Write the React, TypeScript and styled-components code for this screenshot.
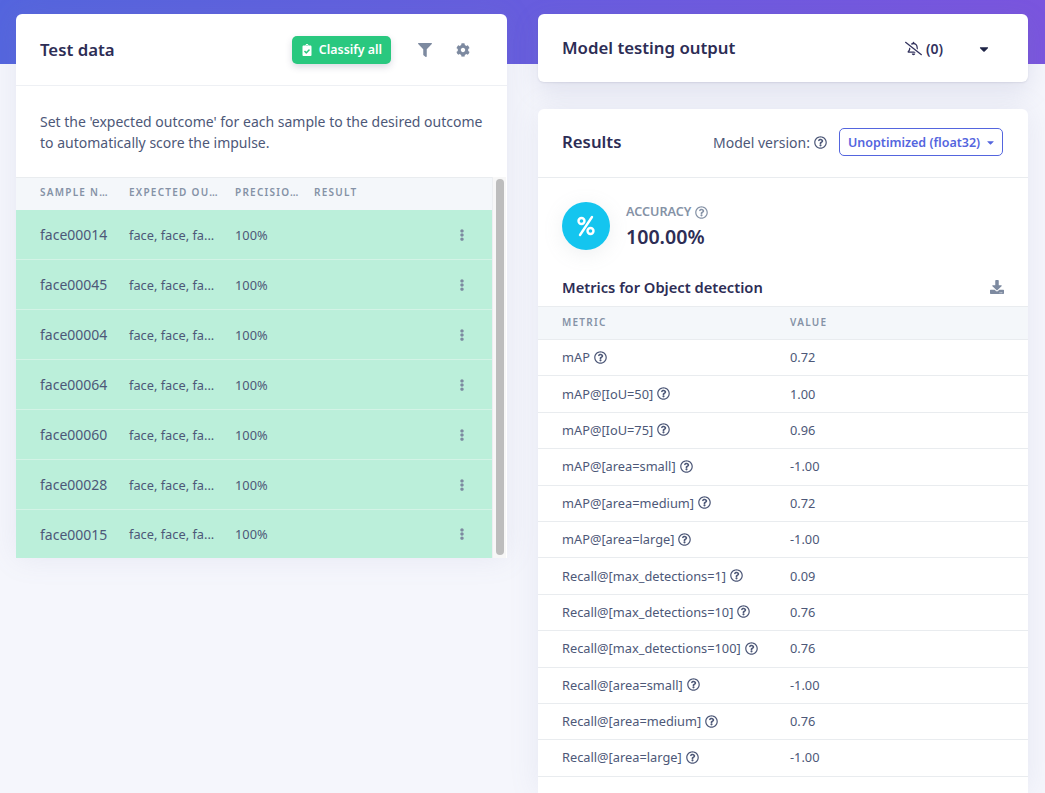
import React from "react";
import styled, { createGlobalStyle } from "styled-components";
import { FaClipboardCheck, FaFilter, FaCog, FaRegBellSlash, FaCaretDown, FaEllipsisV, FaDownload, FaRegQuestionCircle } from "react-icons/fa";

const Global = createGlobalStyle`
  html, body { margin: 0; height: 793px; overflow: hidden; }
  body { font-family: "Noto Sans", "Open Sans", sans-serif; color: #32325d; }
  * { box-sizing: border-box; }
`;
const Page = styled.div`
  width: 1045px; height: 793px; overflow: hidden;
  display: grid; grid-template-columns: 491px 490.5px; grid-template-rows: 1fr; column-gap: 31px;
  padding: 14px 17px 0 15.5px;
  background: linear-gradient(90deg, #5465de 0%, #7a55de 100%) top / 100% 64px no-repeat, #f5f6fc;
`;
const Column = styled.div`display: flex; flex-direction: column; gap: 27px; min-height: 0;`;
const Card = styled.section`
  background: #fff; border-radius: 6px 6px 0 0; box-shadow: 0 0 30px rgba(120,130,170,.12);
`;
const FillCard = styled(Card)`flex: 1;`;
const HeadCard = styled(Card)`
  height: 68px; border-radius: 6px; display: flex; align-items: center; padding: 0 37px 0 24.5px; flex: none;
  box-shadow: 0 1px 2px rgba(50,50,93,.10), 0 8px 26px rgba(120,130,170,.18);
`;
const Title = styled.h3`margin: 0; font-size: 16.8px; line-height: 24px; font-weight: 600; color: #2d2d55;`;
const LeftHead = styled.div`
  height: 72px; display: flex; align-items: center; padding: 0 36.5px 0 24.5px; border-bottom: 1px solid #eef0f4;
`;
const ClassifyBtn = styled.button`
  margin-left: auto; height: 28px; width: 99px; border: 0; border-radius: 5px; background: #29c87f; color: #fff;
  font: 600 12.4px "Noto Sans", sans-serif; display: flex; align-items: center; justify-content: center; gap: 6px;
  box-shadow: 0 3px 7px rgba(50,50,93,.18); padding: 0;
`;
const ToolIcon = styled.span<{ $ml: number }>`
  color: #7d8aa0; font-size: 14px; display: flex; margin-left: ${p => p.$ml}px;
`;
const Intro = styled.p`
  margin: 0; height: 91px; padding: 25px 18px 0 24.5px; font-size: 14px; line-height: 21px; color: #4d5878;
`;
const TableWrap = styled.div`display: grid; grid-template-columns: 476px 14px; background: #f7f7f7; width: 490px;`;
const Scrollbar = styled.div`
  padding: 2px 3px 3px 3px; border-left: 1px solid #eceef1;
  &::after { content: ""; display: block; height: 100%; width: 8px; background: #bdbdbd; border-radius: 4px; }
`;
const LeftHeader = styled.div`
  height: 33px; display: grid; grid-template-columns: 89px 106px 79px 1fr; padding: 0 0 5px 24.5px; align-items: center;
  background: #f4f7fa; border-top: 1px solid #e9ecef;
`;
const HeadCell = styled.span`
  font-size: 10px; font-weight: 600; letter-spacing: 1.25px; color: #8592a6; white-space: nowrap;
`;
const SampleRow = styled.div`
  height: 50px; display: grid; grid-template-columns: 89px 106px 79px 1fr; padding: 0 24px 0 24.5px; align-items: center;
  background: #bbefda; border-bottom: 1px solid #d3f3e6; color: #4d5878;
  &:last-child { height: 48px; border-bottom: 0; }
`;
const SampleName = styled.span`font-size: 14px;`;
const SampleCell = styled.span`font-size: 12.8px;`;
const Dots = styled.span`justify-self: end; color: #7d8aa0; font-size: 12px; display: flex;`;
const Bell = styled.div`
  margin-left: auto; display: flex; align-items: center; gap: 4px; font-size: 14px; font-weight: 600; color: #32325d;
`;
const DarkCaret = styled.span`margin-left: 34px; display: flex; font-size: 14px; color: #1f2547; padding-top: 2px;`;
const ResultsHead = styled.div`
  height: 69px; display: flex; align-items: center; padding: 0 25px 2px 24.5px; border-bottom: 1px solid #e9ecef;
`;
const VersionLabel = styled.span`
  margin-left: auto; font-size: 14px; color: #4d5878; display: flex; align-items: center; gap: 4px;
`;
const Help = styled(FaRegQuestionCircle)<{ $size?: number; $color?: string }>`
  font-size: ${p => p.$size || 13}px; color: ${p => p.$color || "#4d5878"}; flex: none;
`;
const VersionSelect = styled.div`
  margin-left: 12px; width: 164px; height: 28px; border: 1px solid #5465de; border-radius: 5px;
  display: flex; align-items: center; justify-content: space-between; padding: 0 6px 0 8px;
  color: #5465de; font-size: 12.5px; font-weight: 600;
`;
const Accuracy = styled.div`display: flex; gap: 16px; padding: 24px 24.5px 0; height: 95px;`;
const Badge = styled.div`
  width: 48px; height: 48px; border-radius: 50%; background: #14c5ef; color: #fff; display: flex; align-items: center; justify-content: center;
  box-shadow: 0 4px 20px rgba(140,152,164,.15);
`;
const AccLabel = styled.div`
  font-size: 12.6px; line-height: 16px; font-weight: 600; color: #8592a6; display: flex; align-items: center; gap: 4px; margin-top: 2px;
`;
const AccValue = styled.div`font-size: 19.6px; line-height: 28px; font-weight: 600; color: #2d2d55; margin-top: 3px;`;
const MetricsHead = styled.div`
  height: 33px; display: flex; align-items: center; justify-content: space-between; padding: 0 24.5px 5px;
`;
const MetricsTitle = styled.h4`margin: 0; font-size: 14.7px; font-weight: 600; color: #2d2d55;`;
const DownloadIcon = styled(FaDownload)`font-size: 14px; color: #7d8aa0;`;
const MetricHeader = styled.div`
  height: 34px; display: grid; grid-template-columns: 228px 1fr; padding: 0 0 2px 24.5px; align-items: center;
  background: #f4f7fa; border-top: 1px solid #e9ecef; border-bottom: 1px solid #e9ecef;
`;
const MetricRow = styled.div`
  height: 36.4px; display: grid; grid-template-columns: 228px 1fr; padding: 0 0 1px 24.5px; align-items: center;
  border-bottom: 1px solid #e9ecef; font-size: 12.8px; color: #4d5878;
`;
const MetricName = styled.span`display: flex; align-items: center; gap: 4px; white-space: nowrap;`;

const samples = ["face00014", "face00045", "face00004", "face00064", "face00060", "face00028", "face00015"];
const metrics: [string, string][] = [
  ["mAP", "0.72"], ["mAP@[IoU=50]", "1.00"], ["mAP@[IoU=75]", "0.96"], ["mAP@[area=small]", "-1.00"],
  ["mAP@[area=medium]", "0.72"], ["mAP@[area=large]", "-1.00"], ["Recall@[max_detections=1]", "0.09"],
  ["Recall@[max_detections=10]", "0.76"], ["Recall@[max_detections=100]", "0.76"], ["Recall@[area=small]", "-1.00"],
  ["Recall@[area=medium]", "0.76"], ["Recall@[area=large]", "-1.00"],
];

function PercentGlyph() {
  return (
    <svg width="18" height="22" viewBox="0 0 18 22" fill="none" stroke="#fff" strokeWidth="2.4" strokeLinecap="round">
      <circle cx="4.5" cy="6" r="3" />
      <circle cx="13.5" cy="16" r="3" />
      <line x1="15" y1="2" x2="3" y2="20" />
    </svg>
  );
}

export default function App() {
  return (
    <Page>
      <Global />
      <Column>
        <Card>
          <LeftHead>
            <Title>Test data</Title>
            <ClassifyBtn><FaClipboardCheck size={12} />Classify all</ClassifyBtn>
            <ToolIcon $ml={27}><FaFilter /></ToolIcon>
            <ToolIcon $ml={24}><FaCog /></ToolIcon>
          </LeftHead>
          <Intro>Set the 'expected outcome' for each sample to the desired outcome to automatically score the impulse.</Intro>
          <TableWrap>
            <div>
              <LeftHeader>
                <HeadCell>SAMPLE N…</HeadCell>
                <HeadCell>EXPECTED OU…</HeadCell>
                <HeadCell>PRECISIO…</HeadCell>
                <HeadCell>RESULT</HeadCell>
              </LeftHeader>
              {samples.map(s => (
                <SampleRow key={s}>
                  <SampleName>{s}</SampleName>
                  <SampleCell>face, face, fa...</SampleCell>
                  <SampleCell>100%</SampleCell>
                  <Dots><FaEllipsisV /></Dots>
                </SampleRow>
              ))}
            </div>
            <Scrollbar />
          </TableWrap>
        </Card>
      </Column>
      <Column>
        <HeadCard>
          <Title>Model testing output</Title>
          <Bell><FaRegBellSlash size={17} />(0)</Bell>
          <DarkCaret><FaCaretDown /></DarkCaret>
        </HeadCard>
        <FillCard>
          <ResultsHead>
            <Title>Results</Title>
            <VersionLabel>Model version: <Help $size={13} /></VersionLabel>
            <VersionSelect>Unoptimized (float32)<FaCaretDown size={11} /></VersionSelect>
          </ResultsHead>
          <Accuracy>
            <Badge><PercentGlyph /></Badge>
            <div>
              <AccLabel>ACCURACY <Help $size={13} $color="#8592a6" /></AccLabel>
              <AccValue>100.00%</AccValue>
            </div>
          </Accuracy>
          <MetricsHead>
            <MetricsTitle>Metrics for Object detection</MetricsTitle>
            <DownloadIcon />
          </MetricsHead>
          <MetricHeader>
            <HeadCell>METRIC</HeadCell>
            <HeadCell>VALUE</HeadCell>
          </MetricHeader>
          {metrics.map(([n, v]) => (
            <MetricRow key={n}>
              <MetricName>{n} <Help $size={13} /></MetricName>
              <span>{v}</span>
            </MetricRow>
          ))}
        </FillCard>
      </Column>
    </Page>
  );
}
